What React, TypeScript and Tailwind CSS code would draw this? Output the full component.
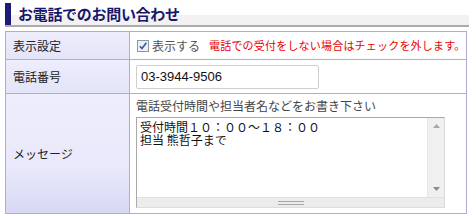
import React from "react";

const jp = { fontFamily: '"Noto Sans CJK JP", "Noto Sans", sans-serif' };

export default function App() {
  return (
    <div className="w-[476px] h-[216px] bg-white pl-[5px] pt-[3px]" style={jp}>
      {/* Header */}
      <div className="w-[464px] h-[24px] flex border-b-2 border-[#ababab] bg-[linear-gradient(to_bottom,#ffffff_0px,#ffffff_12px,#f2f2f2_12px,#f2f2f2_100%)]">
        <div className="w-[6px] h-full bg-[#1c1c78]" />
        <div className="pl-[7px] text-[15px] leading-[22px] font-bold text-[#17176b] tracking-[-0.3px]">
          お電話でのお問い合わせ
        </div>
      </div>

      {/* Table */}
      <div className="mt-[4px] w-[462px] border border-[#aeaed2] text-[12px] text-[#222]">
        {/* Row 1 */}
        <div className="flex h-[28px] border-b border-[#aeaed2]">
          <div className="w-[124px] shrink-0 border-r border-[#aeaed2] bg-[linear-gradient(to_bottom,#ededfc,#e4e4f9)] flex items-center pl-[7px]">
            表示設定
          </div>
          <div className="flex items-center pl-[7px] whitespace-nowrap">
            <svg width="12" height="12" viewBox="0 0 12 12" className="mr-[3px] shrink-0">
              <rect x="0.5" y="0.5" width="11" height="11" fill="#eef0f6" stroke="#8c94a6" />
              <path d="M2.8 6.2 L5 8.6 L9.4 2.8" fill="none" stroke="#3a56a8" strokeWidth="1.6" />
            </svg>
            <span className="text-[#555] text-[12px]">表示する</span>
            <span className="ml-[9px] text-[11px] tracking-[0.2px] text-[#ee0000]">電話での受付をしない場合はチェックを外します。</span>
          </div>
        </div>

        {/* Row 2 */}
        <div className="flex h-[34px] border-b border-[#aeaed2]">
          <div className="w-[124px] shrink-0 border-r border-[#aeaed2] bg-[linear-gradient(to_bottom,#ededfc,#e4e4f9)] flex items-center pl-[7px]">
            電話番号
          </div>
          <div className="pl-[6px] pt-[5px]">
            <div
              className="w-[183px] h-[24px] border border-[#cfcfcf] rounded-[2px] flex items-center pl-[4px] text-[13px] text-[#111]"
              style={{ fontFamily: '"Liberation Sans", Arial, sans-serif' }}
            >
              03-3944-9506
            </div>
          </div>
        </div>

        {/* Row 3 */}
        <div className="flex h-[119px]">
          <div className="w-[124px] shrink-0 border-r border-[#aeaed2] bg-[linear-gradient(to_bottom,#ededfc_0%,#e9e9fb_60%,#d8d8f5_100%)] flex items-center pl-[7px]">
            メッセージ
          </div>
          <div className="pl-[6px] pt-[5px]">
            <div className="text-[12px] leading-[14px] text-[#444]">電話受付時間や担当者名などをお書き下さい</div>
            <div className="mt-[4px] w-[309px] h-[91px] border border-[#a9a9a9] border-r-[#dcdcdc] border-b-[#dcdcdc] flex flex-col">
              <div className="flex flex-1">
                <div className="flex-1 pl-[3px] pt-[2px] text-[12px] leading-[13px] text-[#111] whitespace-pre">
                  {"受付時間１０：００～１８：００\n担当 熊哲子まで"}
                </div>
                <div className="w-[17px] bg-[#f0f0f0] border-l border-[#e6e6e6] flex flex-col items-center justify-between py-[6px]">
                  <svg width="7" height="4" viewBox="0 0 7 4"><path d="M0 4 L3.5 0 L7 4 Z" fill="#a8a8a8" /></svg>
                  <svg width="7" height="4" viewBox="0 0 7 4"><path d="M0 0 L7 0 L3.5 4 Z" fill="#8a8a8a" /></svg>
                </div>
              </div>
              <div className="h-[10px] bg-[#ececec] border-t border-[#e0e0e0] flex items-center justify-center">
                <div className="w-[26px] flex flex-col gap-[2px]">
                  <div className="h-px bg-[#a8a8a8]" />
                  <div className="h-px bg-[#a8a8a8]" />
                </div>
              </div>
            </div>
          </div>
        </div>
      </div>
    </div>
  );
}
